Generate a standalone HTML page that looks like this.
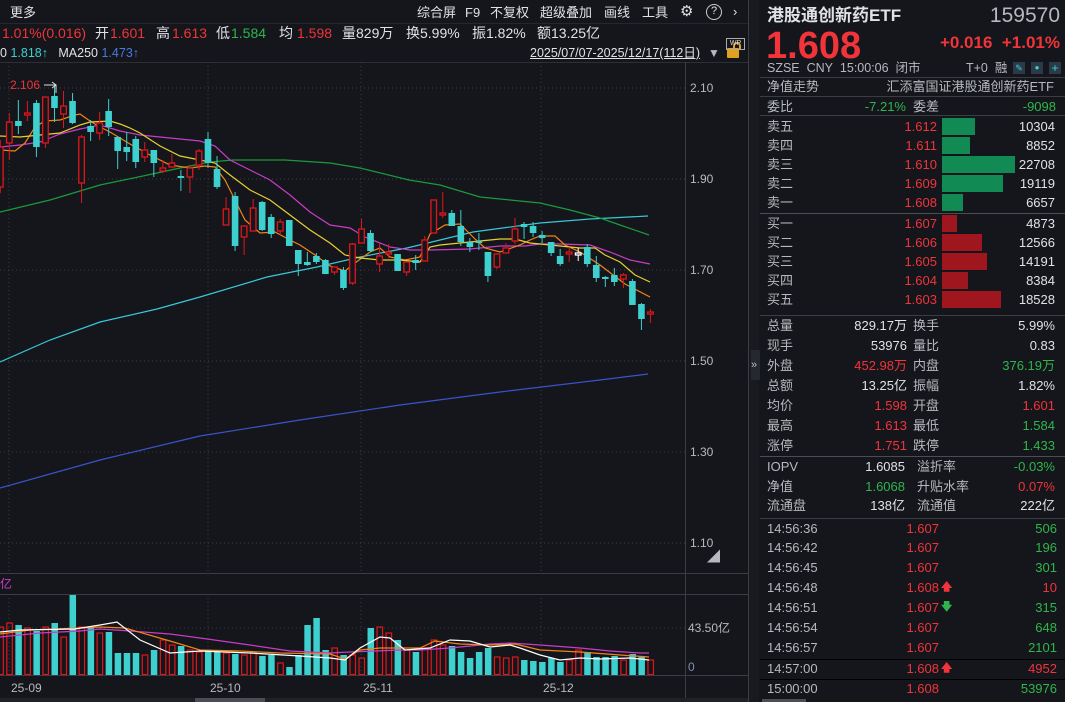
<!DOCTYPE html>
<html><head><meta charset="utf-8"><style>
*{margin:0;padding:0;box-sizing:border-box}
body{width:1065px;height:702px;background:#14161b;overflow:hidden;position:relative;font-family:"Liberation Sans","Noto Sans CJK SC",sans-serif;color:#d0d3d8;font-size:13px}
.a{position:absolute;white-space:nowrap;line-height:16px}
.r{color:#f0343a}.g{color:#2fb54c}.w{color:#e0e2e6}.gr{color:#b6b9bf}
.rt{text-align:right}
.hl{position:absolute;height:1px;background:#3a3d44}
.bar{position:absolute;height:17px}
.h2{position:absolute;top:25px;font-size:14px;line-height:16px;white-space:nowrap}
</style></head><body>
<div style="position:absolute;left:0;top:0;width:748px;height:24px;background:#14161b;border-bottom:1px solid #24272d"></div>
<div class="a w" style="left:10px;top:5px">更多</div>
<div class="a w" style="left:417px;top:5px">综合屏</div>
<div class="a w" style="left:465px;top:5px">F9</div>
<div class="a w" style="left:490px;top:5px">不复权</div>
<div class="a w" style="left:540px;top:5px">超级叠加</div>
<div class="a w" style="left:604px;top:5px">画线</div>
<div class="a w" style="left:642px;top:5px">工具</div>
<div class="a w" style="left:680px;top:4px;font-size:15px">⚙</div>
<div class="a w" style="left:706px;top:4px;width:16px;height:16px;border:1.5px solid #ccc;border-radius:50%;font-size:11px;text-align:center;line-height:13px">?</div>
<div class="a w" style="left:733px;top:4px">›</div>
<div class="h2 r" style="left:2px">1.01%(0.016)</div>
<div class="h2 w" style="left:95px">开</div><div class="h2 r" style="left:110px">1.601</div>
<div class="h2 w" style="left:156px">高</div><div class="h2 r" style="left:172px">1.613</div>
<div class="h2 w" style="left:216px">低</div><div class="h2 g" style="left:231px">1.584</div>
<div class="h2 w" style="left:279px">均</div><div class="h2 r" style="left:297px">1.598</div>
<div class="h2 w" style="left:342px">量829万</div>
<div class="h2 w" style="left:406px">换5.99%</div>
<div class="h2 w" style="left:472px">振1.82%</div>
<div class="h2 w" style="left:537px">额13.25亿</div>
<div class="a" style="left:0px;top:45px;font-size:12.5px"><span class="w">0</span> <span style="color:#3ecfcf">1.818↑</span>&nbsp;&nbsp; <span class="w">MA250</span> <span style="color:#4a78e0">1.473↑</span></div>
<div class="a w" style="left:530px;top:45px;font-size:12.5px;text-decoration:underline">2025/07/07-2025/12/17(112日)</div>
<div class="a gr" style="left:708px;top:45px;font-size:12px">▼</div>
<div class="a" style="left:727px;top:48px;width:12px;height:10px;background:#e0a020;border-radius:1px"></div>
<div class="a" style="left:733px;top:42px;width:8px;height:8px;border:2px solid #e0a020;border-bottom:none;border-radius:4px 4px 0 0"></div>
<div class="a" style="left:726px;top:38px;width:19px;height:12px;border:1px solid #aaa;font-size:7px;line-height:10px;text-align:center;color:#ddd">WP</div>
<div class="hl" style="left:0;top:62px;width:748px;background:#2c2f35"></div>
<svg style="position:absolute;left:0;top:0" width="750" height="702" id="ch">
<g stroke="#3c3f46" stroke-dasharray="1,3">
<line x1="0" y1="88" x2="685" y2="88"/><line x1="0" y1="179" x2="685" y2="179"/><line x1="0" y1="270" x2="685" y2="270"/><line x1="0" y1="361" x2="685" y2="361"/><line x1="0" y1="452" x2="685" y2="452"/><line x1="0" y1="543" x2="685" y2="543"/><line x1="0" y1="628" x2="685" y2="628"/>
<line x1="9" y1="62" x2="9" y2="572"/><line x1="208" y1="62" x2="208" y2="572"/><line x1="361" y1="62" x2="361" y2="572"/><line x1="541" y1="62" x2="541" y2="572"/>
<line x1="9" y1="594" x2="9" y2="675"/><line x1="208" y1="594" x2="208" y2="675"/><line x1="361" y1="594" x2="361" y2="675"/><line x1="541" y1="594" x2="541" y2="675"/>
</g>
<line x1="685.5" y1="62" x2="685.5" y2="702" stroke="#3a3d44"/>
<line x1="0" y1="573.5" x2="748" y2="573.5" stroke="#3a3d44"/>
<line x1="0" y1="594.5" x2="748" y2="594.5" stroke="#3a3d44"/>
<line x1="0" y1="675.5" x2="748" y2="675.5" stroke="#3a3d44"/>
<line x1="748.5" y1="0" x2="748.5" y2="702" stroke="#3a3d44"/>
<g fill="none" stroke-width="1.2">
<polyline stroke="#3a54c8" points="0,488 100,460 200,436 300,420 400,405 500,392 600,380 648,374"/>
<polyline stroke="#38c8d8" points="0,362 50,340 100,322 157,309 200,297 267,277 317,267 360,257 407,248 473,232 540,223 590,219 648,216"/>
<polyline stroke="#1a9a3c" points="0,212 50,200 100,185 143,176 180,168 210,162 233,160 285,160 330,163 360,168 409,180 440,185 480,197 510,200 540,203 570,210 600,218 620,225 649,235"/>
<polyline stroke="#c83cc8" points="0,147 20,145 40,142 60,134 80,129 100,125 120,131 140,135 160,137 180,139 200,141 215,146 230,160 250,170 270,180 290,195 310,212 330,225 350,228 365,237 390,247 410,250 430,250 470,249 500,246 525,246 540,244 560,244 590,245 610,252 630,260 650,264"/>
<polyline stroke="#f08418" points="0,150 15,151 25,143 35,127 45,121 60,120 75,115 80,114 90,121 100,127 110,132 130,144 150,155 170,165 190,168 205,166 215,167 225,180 235,200 245,220 260,233 275,232 290,240 300,245 315,255 330,266 345,271 355,263 370,252 380,248 390,257 405,260 420,257 430,234 445,225 460,224 475,239 485,248 500,252 520,245 530,240 540,236 555,236 565,245 580,252 600,265 625,284 650,297"/>
<polyline stroke="#e8d030" points="0,136 20,137 40,135 60,133 80,125 90,122 110,121 120,124 130,128 140,133 160,146 180,156 200,160 215,163 230,175 250,190 270,200 290,215 310,230 330,243 345,255 360,258 380,260 400,260 420,262 430,247 440,245 480,241 500,239 515,239 530,243 560,246 580,248 595,248 605,255 620,262 635,275 650,282"/>
</g>
<g id="cd"></g>
<g id="vb"></g>
<g fill="none" stroke-width="1.2">
<polyline stroke="#c83cc8" points="0,637 40,633 80,631 100,629 130,631 170,634 200,638 250,645 290,651 330,653 350,652 400,650 420,650 450,648 490,644 510,643 540,645 580,648 610,651 640,653 649,653"/>
<polyline stroke="#f08418" points="0,634 30,630 80,628 100,627 125,628 170,641 200,650 240,651 280,653 330,654 345,659 360,650 380,648 420,648 435,641 460,644 490,645 515,644 540,650 580,652 620,655 649,657"/>
<polyline stroke="#ffffff" points="0,632 20,630 75,629 100,625 117,622 140,640 170,653 200,651 250,653 300,656 330,658 345,660 360,648 380,637 390,638 405,650 430,648 450,640 470,641 490,647 510,645 520,648 540,655 560,660 580,658 600,659 630,658 649,660"/>
</g>
<line x1="44" y1="85" x2="56" y2="85" stroke="#ddd"/><polyline points="52,82 56,85 52,88" fill="none" stroke="#ddd"/><line x1="56" y1="85" x2="56" y2="93" stroke="#ddd"/>
</svg>
<div class="a r" style="left:10px;top:77px;font-size:12px">2.106</div>
<div class="a gr" style="left:690px;top:80px;font-size:12px">2.10</div>
<div class="a gr" style="left:690px;top:171px;font-size:12px">1.90</div>
<div class="a gr" style="left:690px;top:262px;font-size:12px">1.70</div>
<div class="a gr" style="left:690px;top:353px;font-size:12px">1.50</div>
<div class="a gr" style="left:690px;top:444px;font-size:12px">1.30</div>
<div class="a gr" style="left:690px;top:535px;font-size:12px">1.10</div>
<div class="a gr" style="left:707px;top:549px;font-size:13px">◢</div>
<div class="a" style="left:0;top:576px;color:#c83cc8;font-size:12px">亿</div>
<div class="a gr" style="left:688px;top:620px;font-size:12px">43.50亿</div>
<div class="a" style="left:688px;top:659px;font-size:12px;color:#8090b0">0</div>
<div class="a gr" style="left:11px;top:680px;font-size:12px">25-09</div>
<div class="a gr" style="left:210px;top:680px;font-size:12px">25-10</div>
<div class="a gr" style="left:363px;top:680px;font-size:12px">25-11</div>
<div class="a gr" style="left:543px;top:680px;font-size:12px">25-12</div>
<div class="a" style="left:0;top:698px;width:748px;height:4px;background:#1e2127"></div>
<div class="a" style="left:195px;top:698px;width:70px;height:4px;background:#4a4d55"></div>
<div class="a" style="left:749px;top:0;width:10px;height:702px;background:#181a1f"></div>
<div class="a" style="left:751px;top:350px;width:9px;height:30px;background:#25282e;color:#bbb;font-size:11px;line-height:30px">»</div>
<div class="a w" style="left:767px;top:6px;font-size:17px;font-weight:bold;line-height:20px">港股通创新药ETF</div>
<div class="a gr" style="left:960px;top:4px;width:100px;text-align:right;font-size:21px;line-height:24px">159570</div>
<div class="a r" style="left:766px;top:25px;font-size:38px;font-weight:bold;line-height:42px">1.608</div>
<div class="a r" style="left:920px;top:34px;width:140px;text-align:right;font-size:17px;font-weight:bold;line-height:18px">+0.016&nbsp;&nbsp;+1.01%</div>
<div class="a gr" style="left:767px;top:60px;font-size:12.5px">SZSE&nbsp;&nbsp;CNY&nbsp;&nbsp;15:00:06&nbsp;&nbsp;闭市</div>
<div class="a gr" style="left:966px;top:60px;font-size:12.5px">T+0&nbsp;&nbsp;融</div>
<div class="a" style="left:1013px;top:62px;width:12px;height:12px;background:#2a3a48;color:#3ecfcf;font-size:9px;text-align:center;line-height:12px">✎</div>
<div class="a" style="left:1031px;top:62px;width:12px;height:12px;background:#2a3a48;color:#3ecfcf;font-size:8px;text-align:center;line-height:12px">●</div>
<div class="a" style="left:1049px;top:62px;width:12px;height:12px;background:#2a3a48;color:#3ecfcf;font-size:12px;text-align:center;line-height:12px">+</div>
<div class="hl" style="left:760px;top:77px;width:305px"></div>
<div class="a gr" style="left:767px;top:79px">净值走势</div>
<div class="a gr rt" style="left:860px;top:79px;width:194px">汇添富国证港股通创新药ETF</div>
<div class="hl" style="left:760px;top:96px;width:305px"></div>
<div class="a gr" style="left:767px;top:99px">委比</div>
<div class="a g rt" style="left:820px;top:99px;width:86px">-7.21%</div>
<div class="a gr" style="left:913px;top:99px">委差</div>
<div class="a g rt" style="left:980px;top:99px;width:76px">-9098</div>
<div class="hl" style="left:760px;top:115px;width:305px"></div>
<div id="ob"></div>
<div class="hl" style="left:760px;top:213px;width:305px;background:#4a4d55"></div>
<div class="hl" style="left:760px;top:315px;width:305px"></div>
<div id="st"></div>
<div class="hl" style="left:760px;top:456px;width:305px;background:#4a4d55"></div>
<div class="hl" style="left:760px;top:518px;width:305px"></div>
<div class="a" style="left:760px;top:659px;width:305px;height:1px;background:#000"></div>
<div class="a" style="left:760px;top:679px;width:305px;height:1px;background:#000"></div>
<div id="tr"></div>
<div class="a" style="left:762px;top:699px;width:44px;height:3px;background:#4a4d55"></div>
<script>
var C=[[147,187,140,193,'r'],[122,143,113,160,'r'],[121,126,100,134,'c'],[113,115,101,121,'r'],[103,147,100,157,'c'],[97,143,97,148,'r'],[96,108,85,122,'c'],[106,114,91,128,'r'],[101,123,93,124,'c'],[137,183,135,203,'r'],[126,132,120,141,'c'],[123,133,112,140,'r'],[111,127,99,136,'c'],[137,151,137,169,'c'],[147,152,132,161,'c'],[139,162,136,168,'c'],[150,157,142,162,'r'],[150,163,150,177,'c'],[168,171,160,173,'r'],[163,167,154,167,'r'],[176,178,170,191,'c'],[168,177,165,193,'r'],[151,165,149,170,'r'],[139,163,132,168,'c'],[169,187,156,189,'c'],[209,225,197,225,'r'],[196,246,192,251,'c'],[226,237,226,255,'r'],[208,231,199,231,'r'],[202,230,201,231,'c'],[217,234,214,238,'c'],[222,231,219,235,'r'],[220,246,220,246,'c'],[250,264,250,276,'c'],[262,265,252,266,'c'],[256,262,253,264,'c'],[260,274,259,274,'c'],[267,272,267,275,'r'],[270,288,267,290,'c'],[244,283,243,285,'r'],[229,243,219,243,'r'],[233,251,230,252,'c'],[256,264,244,272,'r'],[252,254,244,258,'r'],[254,271,254,271,'c'],[262,272,262,276,'r'],[260,263,255,270,'c'],[240,261,236,261,'r'],[200,233,200,233,'r'],[213,215,192,218,'r'],[213,226,210,226,'c'],[226,242,210,246,'c'],[242,247,238,252,'c'],[241,243,233,250,'c'],[252,276,252,282,'c'],[254,267,254,269,'r'],[248,253,243,253,'r'],[229,241,218,244,'r'],[224,227,222,239,'c'],[226,233,222,237,'c'],[235,238,231,243,'c'],[242,253,242,256,'c'],[256,264,249,266,'c'],[252,254,247,262,'r'],[253,255,248,261,'w'],[247,264,244,267,'c'],[265,278,256,282,'c'],[277,279,276,287,'c'],[275,282,268,286,'c'],[275,279,273,288,'r'],[281,305,279,305,'c'],[304,319,303,330,'c'],[312,314,309,323,'r']];
var V=[627,623,625,628,631,627,623,637,595,627,628,633,632,653,653,653,655,650,640,645,646,650,652,650,652,653,654,655,652,656,655,663,667,655,625,618,650,648,655,655,658,628,627,633,640,650,652,648,640,645,646,652,658,652,648,657,658,657,660,661,662,658,662,660,650,652,657,657,656,660,654,657,660];
var s='',v='';
C.forEach(function(d,i){var x=9.03*i+0.3;var col=d[4]=='c'?'#3ecfcf':(d[4]=='w'?'#ffffff':'#e0161c');
s+='<line x1="'+x+'" y1="'+d[2]+'" x2="'+x+'" y2="'+d[3]+'" stroke="'+col+'"/>';
var h=Math.max(d[1]-d[0],1.5);
if(d[4]=='c')s+='<rect x="'+(x-3.3)+'" y="'+d[0]+'" width="6.6" height="'+h+'" fill="'+col+'"/>';
else s+='<rect x="'+(x-2.8)+'" y="'+d[0]+'" width="5.6" height="'+h+'" fill="#14161b" stroke="'+col+'" stroke-width="1.3"/>';
var t=V[i];var vh=675-t;
if(d[4]=='c')v+='<rect x="'+(x-3)+'" y="'+t+'" width="6.5" height="'+vh+'" fill="#3ecfcf"/>';
else v+='<rect x="'+(x-2.5)+'" y="'+t+'" width="5.5" height="'+(vh-0.5)+'" fill="none" stroke="#e0161c" stroke-width="1.2"/>';});
document.getElementById('cd').innerHTML=s;document.getElementById('vb').innerHTML=v;
var ob=[['卖五','1.612',33,'10304',127,'#128a54'],['卖四','1.611',28,'8852',146,'#128a54'],['卖三','1.610',73,'22708',165,'#128a54'],['卖二','1.609',61,'19119',184,'#128a54'],['卖一','1.608',21,'6657',203,'#128a54'],['买一','1.607',15,'4873',224,'#a0161e'],['买二','1.606',40,'12566',243,'#a0161e'],['买三','1.605',45,'14191',262,'#a0161e'],['买四','1.604',26,'8384',281,'#a0161e'],['买五','1.603',59,'18528',300,'#a0161e']];
var o='';ob.forEach(function(r){var y=r[4]-8;
o+='<div class="a gr" style="left:767px;top:'+y+'px">'+r[0]+'</div><div class="a r rt" style="left:880px;top:'+y+'px;width:57px">'+r[1]+'</div><div class="bar" style="left:942px;top:'+(r[4]-9)+'px;width:'+r[2]+'px;background:'+r[5]+'"></div><div class="a w rt" style="left:990px;top:'+y+'px;width:65px">'+r[3]+'</div>';});
document.getElementById('ob').innerHTML=o;
var st=[['总量','829.17万','w','换手','5.99%','w'],['现手','53976','w','量比','0.83','w'],['外盘','452.98万','r','内盘','376.19万','g'],['总额','13.25亿','w','振幅','1.82%','w'],['均价','1.598','r','开盘','1.601','r'],['最高','1.613','r','最低','1.584','g'],['涨停','1.751','r','跌停','1.433','g']];
var q='';st.forEach(function(r,i){var y=318+20*i;
q+='<div class="a gr" style="left:767px;top:'+y+'px">'+r[0]+'</div><div class="a rt '+r[2]+'" style="left:820px;top:'+y+'px;width:87px">'+r[1]+'</div><div class="a gr" style="left:913px;top:'+y+'px">'+r[3]+'</div><div class="a rt '+r[5]+'" style="left:980px;top:'+y+'px;width:75px">'+r[4]+'</div>';});
var io=[['IOPV','1.6085','w','溢折率','-0.03%','g'],['净值','1.6068','g','升贴水率','0.07%','r'],['流通盘','138亿','w','流通值','222亿','w']];
io.forEach(function(r,i){var y=459+19.5*i;
q+='<div class="a gr" style="left:767px;top:'+y+'px">'+r[0]+'</div><div class="a rt '+r[2]+'" style="left:820px;top:'+y+'px;width:85px">'+r[1]+'</div><div class="a gr" style="left:917px;top:'+y+'px">'+r[3]+'</div><div class="a rt '+r[5]+'" style="left:980px;top:'+y+'px;width:75px">'+r[4]+'</div>';});
document.getElementById('st').innerHTML=q;
var tr=[['14:56:36','1.607','','506','g'],['14:56:42','1.607','','196','g'],['14:56:45','1.607','','301','g'],['14:56:48','1.608','u','10','r'],['14:56:51','1.607','d','315','g'],['14:56:54','1.607','','648','g'],['14:56:57','1.607','','2101','g'],['14:57:00','1.608','u','4952','r'],['15:00:00','1.608','','53976','g']];
var t='';tr.forEach(function(r,i){var y=[521,540,560,580,600,620,640,661,681][i];
t+='<div class="a gr" style="left:767px;top:'+y+'px">'+r[0]+'</div><div class="a r rt" style="left:880px;top:'+y+'px;width:59px">'+r[1]+'</div>';
if(r[2]=='u')t+='<div class="a r" style="left:941px;top:'+(y-1)+'px;font-size:11px;font-weight:bold">🡅</div>';
if(r[2]=='d')t+='<div class="a g" style="left:941px;top:'+(y-1)+'px;font-size:11px;font-weight:bold">🡇</div>';
t+='<div class="a rt '+r[4]+'" style="left:990px;top:'+y+'px;width:67px">'+r[3]+'</div>';});
document.getElementById('tr').innerHTML=t;
</script>
</body></html>
